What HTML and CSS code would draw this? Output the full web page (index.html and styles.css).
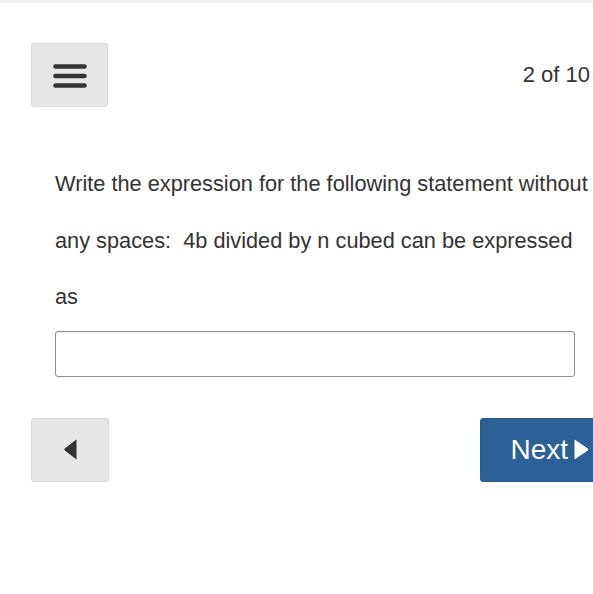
FILE: index.html
```html
<!DOCTYPE html>
<html>
<head>
<meta charset="utf-8">
<link rel="stylesheet" href="styles.css">
</head>
<body>
<div class="topbar"></div>
<div class="page">
  <div class="header">
    <button class="btn btn-light menu-btn" aria-label="Menu">
      <svg width="34" height="26" viewBox="0 0 34 26"><g stroke="#333" stroke-width="4.6" stroke-linecap="round"><line x1="2.5" y1="3.5" x2="31.5" y2="3.5"/><line x1="2.5" y1="13" x2="31.5" y2="13"/><line x1="2.5" y1="22.5" x2="31.5" y2="22.5"/></g></svg>
    </button>
    <div class="counter">2 of 10</div>
  </div>
  <div class="question">
    <p class="prompt">Write the expression for the following statement without any spaces:&nbsp; 4b divided by n cubed can be expressed as</p>
    <input class="answer" type="text">
  </div>
  <div class="nav">
    <button class="btn btn-light prev-btn" aria-label="Previous">
      <svg width="13" height="21" viewBox="0 0 13 21"><path d="M12.5 0.5 L12.5 20.5 L0.8 11.5 Q0 10.5 0.8 9.5 Z" fill="#333"/></svg>
    </button>
    <button class="btn btn-primary next-btn">Next <svg width="15" height="21" viewBox="0 0 15 21"><path d="M0.5 0.5 L0.5 20.5 L13.8 11.5 Q14.6 10.5 13.8 9.5 Z" fill="#fff"/></svg></button>
  </div>
</div>
</body>
</html>
```
FILE: styles.css
```css
html, body {
  margin: 0;
  padding: 0;
  background: #fff;
  overflow: hidden;
}
body {
  width: 593px;
  font-family: "Liberation Sans", Arial, Helvetica, sans-serif;
  color: #333;
}
.topbar {
  height: 3px;
  background: #f2f2f2;
}
.page {
  width: 618px;
  padding-left: 31px;
  box-sizing: border-box;
}
.header {
  display: flex;
  justify-content: space-between;
  align-items: center;
  margin-top: 40px;
  padding-right: 28px;
}
.btn {
  border-radius: 3px;
  font-family: inherit;
  cursor: pointer;
  display: flex;
  align-items: center;
  justify-content: center;
  box-sizing: border-box;
  padding: 0;
}
.btn-light {
  background: #e7e7e7;
  border: 1px solid #d9d9d9;
}
.menu-btn {
  width: 77px;
  height: 64px;
  padding-top: 1px;
}
.counter {
  font-size: 22px;
  color: #333;
}
.question {
  padding-left: 24px;
  padding-top: 49px;
  width: 520px;
}
.prompt {
  margin: 0;
  font-size: 21.75px;
  line-height: 56.5px;
  color: #333;
  width: 540px;
}
.answer {
  display: block;
  margin-top: 5px;
  width: 520px;
  height: 46px;
  box-sizing: border-box;
  border: 1px solid #8f8f8f;
  border-radius: 3px;
  box-shadow: inset 0 1px 1px rgba(0,0,0,0.08);
  background: #fff;
}
.nav {
  display: flex;
  justify-content: space-between;
  margin-top: 41px;
}
.prev-btn {
  width: 78px;
  height: 64px;
}
.btn-primary {
  background: #2b6196;
  border: 1px solid #285a8c;
  color: #fff;
}
.next-btn {
  height: 64px;
  padding: 0 28px 0 29px;
  font-size: 28px;
  gap: 6px;
}
```
